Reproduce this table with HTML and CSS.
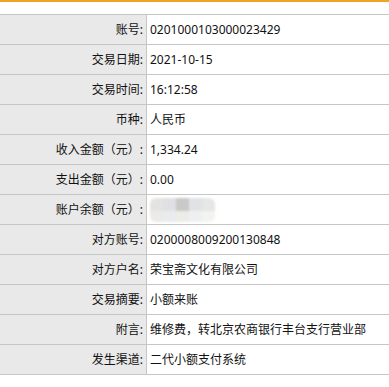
FILE: index.html
```html
<!DOCTYPE html>
<html lang="zh-CN">
<head>
<meta charset="utf-8">
<link rel="stylesheet" href="styles.css">
</head>
<body>
<div class="topbar"></div>
<table class="detail">
<tr><th>账号:</th><td>0201000103000023429</td></tr>
<tr><th>交易日期:</th><td>2021-10-15</td></tr>
<tr><th>交易时间:</th><td>16:12:58</td></tr>
<tr><th>币种:</th><td>人民币</td></tr>
<tr><th>收入金额（元）:</th><td>1,334.24</td></tr>
<tr><th>支出金额（元）:</th><td>0.00</td></tr>
<tr><th>账户余额（元）:</th><td><span class="mosaic"><i class="m1"></i><i class="m2"></i><i class="m3"></i><i class="m4"></i><i class="m5"></i><i class="m6"></i><i class="m7"></i><i class="m8"></i><i class="m9"></i><i class="m10"></i></span></td></tr>
<tr><th>对方账号:</th><td>0200008009200130848</td></tr>
<tr><th>对方户名:</th><td>荣宝斋文化有限公司</td></tr>
<tr><th>交易摘要:</th><td>小额来账</td></tr>
<tr><th>附言:</th><td>维修费，转北京农商银行丰台支行营业部</td></tr>
<tr><th>发生渠道:</th><td>二代小额支付系统</td></tr>
</table>
</body>
</html>
```
FILE: styles.css
```css
html, body {
  margin: 0;
  padding: 0;
  background: #fff;
}
body {
  font-family: "Noto Sans", "Noto Sans CJK SC", sans-serif;
  font-size: 12px;
  color: #111;
}
.topbar {
  height: 2px;
  background: #f0a424;
  margin-bottom: 12px;
}
.detail {
  width: 100%;
  border-collapse: collapse;
}
.detail th,
.detail td {
  height: 29px;
  padding: 0;
  border-top: 1px solid #c6c6c6;
  border-bottom: 1px solid #c6c6c6;
  vertical-align: middle;
  line-height: 16px;
}
.detail th {
  width: 143px;
  padding-right: 3px;
  text-align: right;
  font-weight: normal;
  background: #e9e9e9;
  border-right: 1px solid #c6c6c6;
}
.detail td {
  padding-left: 3px;
  text-align: left;
}
.mosaic {
  display: inline-grid;
  grid-template-columns: repeat(5, 13px);
  grid-template-rows: 13px 11px;
  vertical-align: middle;
  filter: blur(0.8px);
  border-radius: 6px;
  overflow: hidden;
}
.mosaic i { display: block; }
.m1 { background: #e4e3e1; }
.m2 { background: #dfe0e3; }
.m3 { background: #cbc9c7; }
.m4 { background: #e0e2e6; }
.m5 { background: #e6e6e4; }
.m6 { background: #ebeae8; }
.m7 { background: #eaebed; }
.m8 { background: #ecece8; }
.m9 { background: #eef0ef; }
.m10 { background: #f3f3f1; }
```
